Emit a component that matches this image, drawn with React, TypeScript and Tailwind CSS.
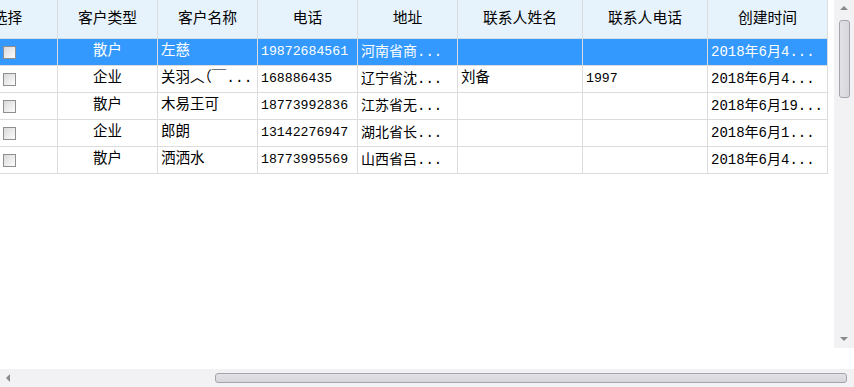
import React from 'react'

type Row = {
  type: string
  name: string
  phone: string
  addr: string
  cname: string
  cphone: string
  time: string
  selected?: boolean
}

const rows: Row[] = [
  { type: '散户', name: '左慈', phone: '19872684561', addr: '河南省商...', cname: '', cphone: '', time: '2018年6月4...', selected: true },
  { type: '企业', name: '关羽︿（￣...', phone: '168886435', addr: '辽宁省沈...', cname: '刘备', cphone: '1997', time: '2018年6月4...' },
  { type: '散户', name: '木易王可', phone: '18773992836', addr: '江苏省无...', cname: '', cphone: '', time: '2018年6月19...' },
  { type: '企业', name: '郎朗', phone: '13142276947', addr: '湖北省长...', cname: '', cphone: '', time: '2018年6月1...' },
  { type: '散户', name: '洒洒水', phone: '18773995569', addr: '山西省吕...', cname: '', cphone: '', time: '2018年6月4...' },
]

const headers = [
  { label: '选择', w: 'w-[100px]' },
  { label: '客户类型', w: 'w-[100px]' },
  { label: '客户名称', w: 'w-[100px]' },
  { label: '电话', w: 'w-[100px]' },
  { label: '地址', w: 'w-[100px]' },
  { label: '联系人姓名', w: 'w-[125px]' },
  { label: '联系人电话', w: 'w-[125px]' },
  { label: '创建时间', w: 'w-[120px]' },
]

const font = { fontFamily: '"Liberation Mono", "Noto Sans CJK SC", monospace' }

function Checkbox() {
  return (
    <div className="ml-[4px] h-[13px] w-[13px] border border-[#8f8f8f] bg-gradient-to-br from-[#d9d9d9] to-[#fdfdfd]" />
  )
}

function Cell({ w, children, center, size = 'text-[14px]' }: { w: string; children?: React.ReactNode; center?: boolean; size?: string }) {
  return (
    <div
      className={`${w} ${size} flex h-full shrink-0 items-center overflow-hidden whitespace-nowrap border-r border-[#dcdcdc] ${
        center ? 'justify-center' : 'pl-[3px]'
      }`}
    >
      {children}
    </div>
  )
}

export default function App() {
  return (
    <div className="flex h-[387px] w-[854px] flex-col bg-white text-black" style={font}>
      <div className="flex h-[369px]">
        <div className="w-[834px] overflow-hidden">
          <div className="-ml-[42px] w-[870px]">
            <div className="flex h-[39px] border-b border-[#d6dde4] bg-[#e6f3fd]">
              {headers.map((h) => (
                <Cell key={h.label} w={h.w} center size="text-[14.8px]">
                  {h.label}
                </Cell>
              ))}
            </div>
            {rows.map((r, i) => (
              <div
                key={i}
                className={`flex h-[27px] border-b border-[#dcdcdc] ${r.selected ? 'bg-[#3399ff] text-white' : ''}`}
              >
                <Cell w="w-[100px]" center>
                  <Checkbox />
                </Cell>
                <Cell w="w-[100px]" center size="text-[14.5px]">{r.type}</Cell>
                <Cell w="w-[100px]" size="text-[14.5px]">{r.name}</Cell>
                <Cell w="w-[100px]" size="text-[13.2px]">{r.phone}</Cell>
                <Cell w="w-[100px]">{r.addr}</Cell>
                <Cell w="w-[125px]" size="text-[14.5px]">{r.cname}</Cell>
                <Cell w="w-[125px]" size="text-[13.2px]">{r.cphone}</Cell>
                <Cell w="w-[120px]">{r.time}</Cell>
              </div>
            ))}
          </div>
        </div>

        {/* vertical scrollbar */}
        <div className="flex h-[348px] w-[20px] flex-col items-center bg-[#f2f2f5]">
          <div className="mt-[6px] h-0 w-0 border-x-[4px] border-b-[4px] border-x-transparent border-b-[#8a8a8e]" />
          <div className="mt-[10px] h-[78px] w-[11px] rounded-[3px] border border-[#a4a4ac] bg-gradient-to-r from-[#e2e2e6] to-[#d6d6dc]" />
          <div className="flex-1" />
          <div className="mb-[7px] h-0 w-0 border-x-[4px] border-t-[4px] border-x-transparent border-t-[#8a8a8e]" />
        </div>
      </div>

      {/* horizontal scrollbar */}
      <div className="flex h-[18px] items-center bg-[#f2f2f5]">
        <div className="ml-[6px] h-0 w-0 border-y-[4px] border-r-[4px] border-y-transparent border-r-[#8a8a8e]" />
        <div className="ml-[205px] h-[10px] w-[632px] rounded-[3px] border border-[#a4a4ac] bg-gradient-to-b from-[#e2e2e6] to-[#d6d6dc]" />
      </div>
    </div>
  )
}
